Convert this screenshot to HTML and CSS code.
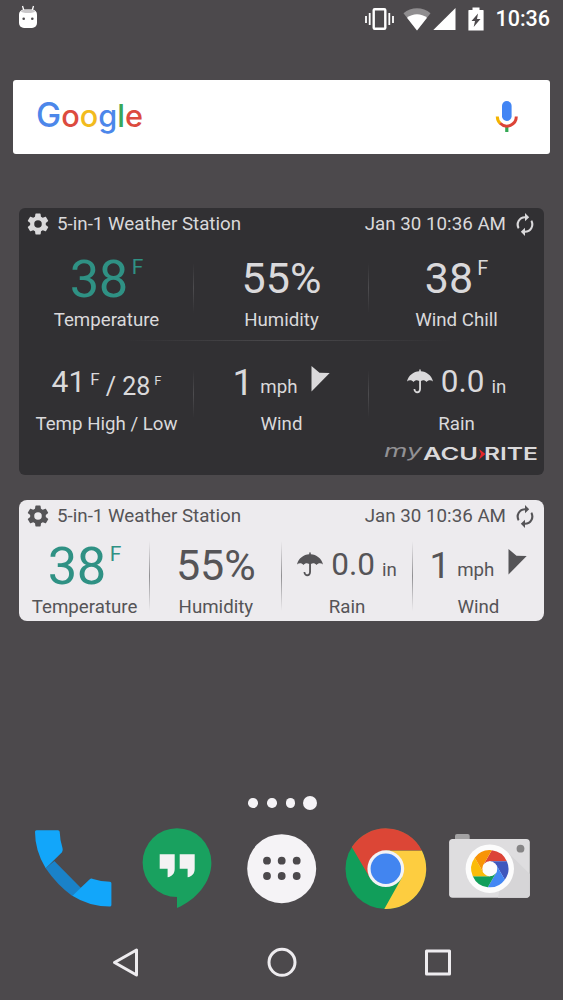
FILE: index.html
```
<!DOCTYPE html>
<html lang="en">
<head>
<meta charset="UTF-8">
<meta name="viewport" content="width=device-width, initial-scale=1.0">
<title>Weather Station Widgets</title>
<link rel="stylesheet" href="styles.css">
</head>
<body>
    <!-- Shared icons -->
    <svg class="sprite" aria-hidden="true">
        <symbol id="gear" viewBox="1.500 1.500 21 21">
            <path fill-rule="evenodd" d="M19.4 13c.04-.33.07-.66.07-1s-.03-.67-.07-1l2.1-1.65c.2-.15.25-.42.12-.64l-2-3.46c-.12-.22-.38-.3-.6-.22l-2.5 1c-.52-.4-1.07-.73-1.7-.98l-.37-2.65A.5.5 0 0 0 14 2h-4a.5.5 0 0 0-.5.42l-.37 2.65c-.62.25-1.17.58-1.7.98l-2.48-1c-.23-.1-.5 0-.6.22l-2 3.46c-.14.22-.08.5.1.64L4.57 11c-.04.33-.07.66-.07 1s.03.67.07 1l-2.1 1.65c-.2.15-.25.42-.12.64l2 3.46c.12.22.38.3.6.22l2.5-1c.52.4 1.07.73 1.7.98l.37 2.65c.04.24.25.4.5.4h4c.25 0 .46-.16.5-.4l.37-2.65c.62-.25 1.17-.6 1.7-.98l2.48 1c.23.1.5 0 .6-.22l2-3.46c.13-.22.08-.5-.1-.64L19.4 13zM12 15.6a3.6 3.6 0 1 1 0-7.2 3.6 3.6 0 0 1 0 7.2z"/>
        </symbol>
        <symbol id="refresh" viewBox="1.500 1 21 22">
            <path d="M12 6v3l4-4-4-4v3a8 8 0 0 0-6.76 12.26l1.46-1.46A6 6 0 0 1 12 6zm6.76 1.74L17.3 9.2A6 6 0 0 1 12 18v-3l-4 4 4 4v-3a8 8 0 0 0 6.76-12.26z"/>
        </symbol>
        <symbol id="umbrella" viewBox="0 0 27 25">
            <path d="M0 12.5C1.4 6 7 2 12.7 1.8V.7a.8.8 0 0 1 1.6 0v1.1C20 2 25.600 6 27 12.500c-2-1.700-5.200-1.600-6.700.6-1.500-1.900-3.900-2.300-5.800-1.100V20.300c0 5.900-7.700 5.600-7.700 0h1.800c0 3.200 4 3.200 4 0V12c-2-1.200-4.400-.8-5.900 1.100C5.200 10.900 2 10.800 0 12.500z"/>
        </symbol>
        <symbol id="arrow" viewBox="0 0 19 26">
            <path d="M.5 0 8.500 6.700 18.700 7 .5 25.500z"/>
        </symbol>
    </svg>

    <div class="screen">
        <!-- Status bar -->
        <div class="status-bar">
            <svg class="robot" width="20" height="24" viewBox="0 0 20 24">
                <path d="M4.500 1 6 6M15.500 1 14 6" stroke="#fff" stroke-width="1.300"/>
                <rect x="1" y="4.500" width="18" height="18.500" rx="5" fill="#fff"/>
                <ellipse cx="10" cy="6.300" rx="7" ry="1.800" fill="#c9c7c9"/>
                <circle cx="5.700" cy="13.700" r="1.300" fill="#4c494c"/>
                <circle cx="14.300" cy="13.700" r="1.300" fill="#4c494c"/>
            </svg>
            <div class="status-icons">
                <svg width="29" height="24" viewBox="0 0 29 24">
                    <rect x="8.700" y="2.300" width="11.600" height="19.400" rx="1" fill="none" stroke="#fff" stroke-width="2.400"/>
                    <path d="M1 9v7M4.700 6v12M24.300 6v12M28 9v7" stroke="#fff" stroke-width="1.800"/>
                </svg>
                <svg class="wifi" width="28" height="24" viewBox="0 0 28 24">
                    <path d="M14 23.500 .5 6.300C8-.5 20-.5 27.500 6.300z" fill="#8f8d8f"/>
                    <path d="M14 23.500 4 10.800c5.500-4.700 14.500-4.700 20 0z" fill="#fff"/>
                </svg>
                <svg class="signal" width="23" height="24" viewBox="0 0 23 24">
                    <path d="M22.500 1v22H.3z" fill="#fff"/>
                </svg>
                <svg class="battery" width="16" height="24" viewBox="0 0 16 24">
                    <path fill-rule="evenodd" d="M4.500.5h7V3H15q.6 0 .6.600V23.500H.400V3.600Q.400 3 1 3h3.500zM10 6.500 3.500 14H7l-1.300 6L12.500 12H9z" fill="#fff"/>
                </svg>
                <span class="clock">10:36</span>
            </div>
        </div>

        <!-- Search -->
        <div class="search-bar">
            <svg class="google" width="112" height="60" viewBox="0 0 112 60">
                <text x="-1" y="40" textLength="107" lengthAdjust="spacingAndGlyphs"><tspan class="capital" fill="#4c87ea">G</tspan><tspan fill="#dc4b3e">o</tspan><tspan fill="#f2bb1d">o</tspan><tspan fill="#4c87ea">g</tspan><tspan fill="#3aa757">l</tspan><tspan fill="#dc4b3e">e</tspan></text>
            </svg>
            <svg class="mic" width="24" height="34" viewBox="0 0 24 34">
                <rect x="7" y="1" width="9.600" height="20" rx="4.800" fill="#4285f4"/>
                <path d="M11.800 26v6" stroke="#34a853" stroke-width="3.200"/>
                <path d="M2.300 16.500a9.500 9.500 0 0 0 2.900 6.900" fill="none" stroke="#f4b400" stroke-width="3"/>
                <path d="M5.100 23.300a9.500 9.500 0 0 0 16.200-6.800" fill="none" stroke="#dc4437" stroke-width="3"/>
            </svg>
        </div>

        <!-- Large widget -->
        <div class="widget dark">
            <div class="widget-header">
                <svg class="gear"><use href="#gear"/></svg>
                <span>5-in-1 Weather Station</span>
                <span class="updated">Jan 30 10:36 AM</span>
                <svg class="refresh"><use href="#refresh"/></svg>
            </div>
            <div class="row">
                <div class="cell">
                    <div class="reading teal"><span class="big">38</span><span class="degree">F</span></div>
                    <div class="label">Temperature</div>
                </div>
                <div class="cell">
                    <div class="reading"><span class="medium">55%</span></div>
                    <div class="label">Humidity</div>
                </div>
                <div class="cell">
                    <div class="reading"><span class="medium">38</span><span class="degree chill">F</span></div>
                    <div class="label">Wind Chill</div>
                </div>
            </div>
            <div class="row second">
                <div class="cell">
                    <div class="reading"><span class="high">41</span><span class="high-degree">F</span><span class="low">/ 28</span><span class="low-degree">F</span></div>
                    <div class="label">Temp High / Low</div>
                </div>
                <div class="cell">
                    <div class="reading"><span class="speed">1</span><span class="unit">mph</span><svg class="arrow"><use href="#arrow"/></svg></div>
                    <div class="label">Wind</div>
                </div>
                <div class="cell">
                    <div class="reading"><svg class="umbrella"><use href="#umbrella"/></svg><span class="amount">0.0</span><span class="unit">in</span></div>
                    <div class="label">Rain</div>
                </div>
            </div>
            <svg class="brand" width="158" height="30" viewBox="0 0 158 30">
                <text class="brand-my" x="1" y="17" textLength="38" lengthAdjust="spacingAndGlyphs">my</text>
                <text class="brand-name" x="40" y="20" textLength="55" lengthAdjust="spacingAndGlyphs">ACU</text>
                <path d="M96 9 102.500 14 96 19.500 98 14z" fill="#e3262b"/>
                <text class="brand-name" x="101" y="20" textLength="54" lengthAdjust="spacingAndGlyphs">RITE</text>
            </svg>
        </div>

        <!-- Compact widget -->
        <div class="widget light">
            <div class="widget-header">
                <svg class="gear"><use href="#gear"/></svg>
                <span>5-in-1 Weather Station</span>
                <span class="updated">Jan 30 10:36 AM</span>
                <svg class="refresh"><use href="#refresh"/></svg>
            </div>
            <div class="row">
                <div class="cell">
                    <div class="reading teal"><span class="big">38</span><span class="degree">F</span></div>
                    <div class="label">Temperature</div>
                </div>
                <div class="cell">
                    <div class="reading"><span class="medium">55%</span></div>
                    <div class="label">Humidity</div>
                </div>
                <div class="cell">
                    <div class="reading"><svg class="umbrella"><use href="#umbrella"/></svg><span class="amount">0.0</span><span class="unit">in</span></div>
                    <div class="label">Rain</div>
                </div>
                <div class="cell">
                    <div class="reading"><span class="speed">1</span><span class="unit">mph</span><svg class="arrow"><use href="#arrow"/></svg></div>
                    <div class="label">Wind</div>
                </div>
            </div>
        </div>

        <!-- Page indicator -->
        <div class="pager">
            <span class="dot"></span>
            <span class="dot"></span>
            <span class="dot"></span>
            <span class="dot current"></span>
        </div>

        <!-- Dock -->
        <div class="dock">
            <svg viewBox="0 0 104.300 100">
                <path d="M24.700 48.300 33.300 41 60 68 51.300 76Q36 65 24.700 48.300z" fill="#1a82c9"/>
                <path d="M15.500 10.300H37q1.500 0 1.700 1.500.2 8.200 2.800 16.200.8 2.700-.5 4.200L24.700 48.300Q14 31 14 11.800q0-1.500 1.500-1.500z" fill="#12a6fa"/>
                <path d="M51.300 75.800 68.500 59.500q1.500-1.400 3.500-.6 8 2.700 17 2.800 1.400.1 1.400 1.600V85q0 1.600-1.600 1.600Q68 86.500 51.300 75.800z" fill="#12a6fa"/>
            </svg>
            <svg viewBox="0 0 104.300 100">
                <path d="M52 88V77A34.400 34.400 0 1 1 86.400 42.700C86.400 62 71 80 52 88z" fill="#19a15f"/>
                <path d="M34.700 34.300h15V49c0 4.500-2.700 7.500-7.100 8.300V48.700h-7.900zM54.700 34.300h15V49c0 4.500-2.700 7.500-7.100 8.300V48.700h-7.900z" fill="#f3f2f3"/>
            </svg>
            <svg viewBox="0 0 104.300 100">
                <circle cx="51.700" cy="48.700" r="34.500" fill="#f5f3f6"/>
                <g fill="#4c494c">
                    <circle cx="37" cy="40.700" r="3.900"/>
                    <circle cx="51.700" cy="40.700" r="3.900"/>
                    <circle cx="66.700" cy="40.700" r="3.900"/>
                    <circle cx="37" cy="56" r="3.900"/>
                    <circle cx="51.700" cy="56" r="3.900"/>
                    <circle cx="66.700" cy="56" r="3.900"/>
                </g>
            </svg>
            <svg viewBox="0 0 104.300 100">
                <g transform="translate(51.800 48.700)">
                    <circle r="40.300" fill="#119e5a"/>
                    <path d="M36-18.300H0L16 9-1.500 40.300A40.300 40.300 0 0 0 36-18.300z" fill="#fdcd40"/>
                    <path d="M-34-21.600-16 9 0-18.300H36A40.300 40.300 0 0 0-34-21.600z" fill="#dc4636"/>
                    <circle r="18.400" fill="#f3f3f5"/>
                    <circle r="15.200" fill="#4285f0"/>
                </g>
            </svg>
            <svg viewBox="0 0 104.300 100">
                <rect x="17" y="14" width="14.700" height="8" rx="2" fill="#a3a2a3"/>
                <rect x="11.100" y="19" width="80.700" height="58.700" rx="3.500" fill="#dedddf"/>
                <path d="M68.500 31 91.800 54V74.200q0 3.500-3.500 3.500H60z" fill="#d6d5d7"/>
                <circle cx="82.500" cy="28.700" r="3.900" fill="#868586"/>
                <g transform="translate(51.800 48.700)">
                    <circle r="24.200" fill="#fcfcfc"/>
                    <path d="M-6.500-3.750 2-18.500A18.600 18.600 0 0 1 17-7.500H0z" fill="#dc4437"/>
                    <path d="M-6.500-3.750 2-18.500A18.600 18.600 0 0 1 17-7.500H0z" fill="#3f57bd" transform="rotate(60)"/>
                    <path d="M-6.500-3.750 2-18.500A18.600 18.600 0 0 1 17-7.500H0z" fill="#4387f4" transform="rotate(120)"/>
                    <path d="M-6.500-3.750 2-18.500A18.600 18.600 0 0 1 17-7.500H0z" fill="#119e5a" transform="rotate(180)"/>
                    <path d="M-6.500-3.750 2-18.500A18.600 18.600 0 0 1 17-7.500H0z" fill="#fbbc09" transform="rotate(240)"/>
                    <path d="M-6.500-3.750 2-18.500A18.600 18.600 0 0 1 17-7.500H0z" fill="#f89406" transform="rotate(300)"/>
                    <circle r="7.500" fill="#fcfcfc"/>
                </g>
            </svg>
        </div>

        <!-- Navigation -->
        <div class="nav-bar">
            <svg width="32" height="32" viewBox="0 0 32 32"><path d="M5.500 16.500 27.500 4V29z"/></svg>
            <svg width="32" height="32" viewBox="0 0 32 32"><circle cx="16" cy="16.300" r="13"/></svg>
            <svg width="32" height="32" viewBox="0 0 32 32"><rect x="4.500" y="5" width="23" height="23"/></svg>
        </div>
    </div>
</body>
</html>
```
FILE: styles.css
```
* {
    box-sizing: border-box;
}
body {
    margin: 0;
    background-color: #4c494c;
    font-family: Roboto, "Liberation Sans", sans-serif;
}
svg {
    display: block;
    flex-shrink: 0;
}
.sprite {
    width: 0;
    height: 0;
    position: absolute;
}
.screen {
    width: 563px;
    height: 1000px;
    display: flex;
    flex-direction: column;
    overflow: hidden;
}

/* Status bar */
.status-bar {
    height: 38px;
    padding: 0 13px 0 18px;
    display: flex;
    justify-content: space-between;
    align-items: center;
}
.robot {
    margin-bottom: 4px;
}
.status-icons {
    display: flex;
    align-items: center;
}
.wifi {
    margin-left: 9px;
}
.signal {
    margin-left: 2px;
}
.battery {
    margin-left: 12px;
}
.clock {
    margin-left: 11px;
    color: #fff;
    font-size: 21.5px;
    font-weight: 500;
    line-height: 24px;
}

/* Search */
.search-bar {
    height: 74px;
    margin: 42px 13px 54px;
    padding: 0 31px 0 24px;
    display: flex;
    justify-content: space-between;
    align-items: center;
    background-color: #fff;
    border-radius: 3px;
}
.google {
    overflow: visible;
    font-family: Inter, "Open Sans", sans-serif;
    font-size: 31px;
    font-weight: 500;
}
.google .capital {
    font-size: 34px;
}

/* Widgets */
.widget {
    width: 525px;
    margin-left: 19px;
    display: flex;
    flex-direction: column;
}
.dark {
    height: 266.5px;
    background-color: #313033;
    border-radius: 6px;
    color: #dad9db;
}
.light {
    height: 121px;
    margin-top: 25.5px;
    background-color: #edebee;
    border-radius: 8px;
    color: #555457;
}
.widget svg {
    fill: currentColor;
}
.widget-header {
    height: 35px;
    padding: 0 8px 3px;
    display: flex;
    align-items: center;
    font-size: 18.75px;
    line-height: 22px;
    white-space: nowrap;
}
.gear {
    width: 22px;
    height: 22px;
    margin-right: 8px;
}
.updated {
    margin-left: auto;
}
.refresh {
    width: 22px;
    height: 23px;
    margin-left: 8px;
}
.row {
    display: flex;
}
.cell {
    flex: 1;
    background-repeat: no-repeat;
}
.dark .row {
    height: 93px;
    margin-top: 5px;
    background: linear-gradient(to right, transparent 20%, #4a494c 50%, transparent 83%) bottom / 100% 1px no-repeat;
}
.dark .row.second {
    height: 95px;
    margin-top: 0;
    padding-top: 11px;
    background: none;
}
.dark .cell:not(:last-child) {
    background-image: linear-gradient(transparent, #4d4c4f, transparent);
    background-position: right 15px;
    background-size: 1px 50px;
}
.dark .second .cell:not(:last-child) {
    background-position: right 18px;
    background-size: 1px 48px;
}
.light .cell:not(:last-child) {
    background-image: linear-gradient(transparent, #908f92, transparent);
    background-position: right 6px;
    background-size: 1px 70px;
}
.reading {
    height: 62.5px;
    display: flex;
    justify-content: center;
    align-items: flex-start;
    line-height: 1;
    white-space: nowrap;
}
.teal {
    color: #2f9184;
}
.label {
    font-size: 18.7px;
    line-height: 1;
    text-align: center;
    white-space: nowrap;
}
.big {
    margin-top: 5px;
    font-size: 52.5px;
    letter-spacing: -0.5px;
}
.medium {
    margin-top: 9px;
    font-size: 43px;
}
.degree {
    margin: 9px 0 0 4px;
    font-size: 21px;
}
.degree.chill {
    margin-top: 10px;
    font-size: 20px;
}
.high {
    margin-top: 15px;
    font-size: 30px;
}
.high-degree {
    margin: 18.5px 6px 0 5px;
    font-size: 17px;
}
.low {
    margin-top: 22px;
    font-size: 25px;
}
.low-degree {
    margin: 22px 0 0 4px;
    font-size: 13px;
}
.speed {
    margin-top: 12px;
    font-size: 37px;
}
.amount {
    margin: 14px 0 0 8px;
    font-size: 31.5px;
}
.unit {
    margin: 26px 0 0 7px;
    font-size: 18.7px;
}
.arrow {
    width: 19px;
    height: 26px;
    margin: 14px 0 0 14px;
}
.umbrella {
    width: 26px;
    height: 25px;
    margin-top: 17px;
}
.brand {
    margin: 4px 3px 0 auto;
    overflow: visible;
    font-family: Inter, "Open Sans", sans-serif;
    font-size: 17px;
}
.brand-my {
    fill: #929194;
    font-style: italic;
}
.brand-name {
    font-weight: 600;
}

/* Page indicator */
.pager {
    height: 14px;
    margin: auto 0 10px 2px;
    display: flex;
    justify-content: center;
    align-items: center;
    gap: 9.3px;
}
.dot {
    width: 9.5px;
    height: 9.5px;
    border-radius: 50%;
    background-color: #f5f3f6;
}
.dot.current {
    width: 14px;
    height: 14px;
    margin-left: -2px;
}

/* Dock */
.dock {
    height: 100px;
    margin: 0 20.5px 4px 21px;
    display: flex;
}
.dock svg {
    width: 20%;
    height: 100px;
}

/* Navigation */
.nav-bar {
    height: 76px;
    padding: 0 109px;
    display: flex;
    justify-content: space-between;
    align-items: center;
}
.nav-bar svg {
    fill: none;
    stroke: #eeecef;
    stroke-width: 3;
    stroke-linejoin: round;
}
```
